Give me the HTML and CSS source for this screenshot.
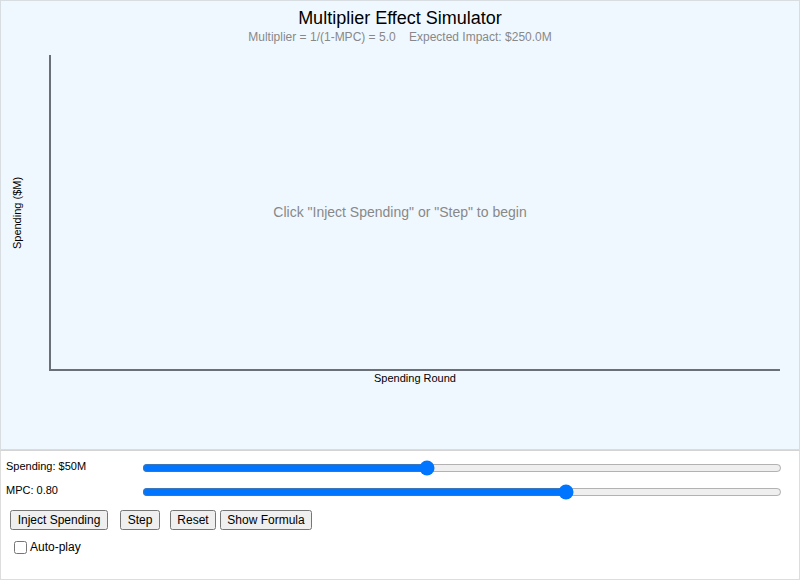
FILE: index.html
```html
<!DOCTYPE html>
<html>
<head>
<meta charset="utf-8">
<link rel="stylesheet" href="styles.css">
</head>
<body>
<div class="app">
  <div class="chart">
    <svg class="chart-svg" width="798" height="448" viewBox="0 0 798 448">
      <text class="title" x="399" y="23" text-anchor="middle">Multiplier Effect Simulator</text>
      <text class="subtitle" x="399" y="40" text-anchor="middle">Multiplier = 1/(1-MPC) = 5.0&#160;&#160;&#160;&#160;Expected Impact: $250.0M</text>
      <line class="axis" x1="49" y1="54" x2="49" y2="370"/>
      <line class="axis" x1="48" y1="369" x2="779" y2="369"/>
      <text class="axis-label" x="414" y="381" text-anchor="middle">Spending Round</text>
      <text class="axis-label" x="20" y="212" text-anchor="middle" transform="rotate(-90 20 212)">Spending ($M)</text>
      <text class="hint" x="399" y="216" text-anchor="middle">Click "Inject Spending" or "Step" to begin</text>
    </svg>
  </div>
  <div class="controls">
    <div class="row">
      <label class="lbl">Spending: $50M</label>
      <input class="slider" type="range" min="10" max="100" value="50">
    </div>
    <div class="row">
      <label class="lbl">MPC: 0.80</label>
      <input class="slider" type="range" min="0.5" max="0.95" step="0.01" value="0.8">
    </div>
    <div class="buttons">
      <button class="btn b1">Inject Spending</button>
      <button class="btn b2">Step</button>
      <button class="btn b3">Reset</button>
      <button class="btn b4">Show Formula</button>
    </div>
    <div class="check-row">
      <label class="check"><input type="checkbox" class="cb">Auto-play</label>
    </div>
  </div>
</div>
</body>
</html>
```

FILE: styles.css
```css
html, body {
  margin: 0;
  padding: 0;
  background: #ffffff;
}
body {
  font-family: "Liberation Sans", Arial, sans-serif;
}
.app {
  width: 800px;
  display: flex;
  flex-direction: column;
}
.chart {
  height: 448px;
  background: #f0f8ff;
  border: 1px solid #d8dde2;
}
.chart-svg {
  display: block;
}
.title {
  font-family: "Liberation Sans", Arial, sans-serif;
  font-size: 18px;
  fill: #000000;
}
.subtitle {
  font-family: "Liberation Sans", Arial, sans-serif;
  font-size: 12px;
  fill: #888888;
}
.axis {
  stroke: #6b7078;
  stroke-width: 2;
}
.axis-label {
  font-family: "Liberation Sans", Arial, sans-serif;
  font-size: 11px;
  fill: #000000;
}
.hint {
  font-family: "Liberation Sans", Arial, sans-serif;
  font-size: 14px;
  fill: #888888;
}
.controls {
  height: 118px;
  border: 1px solid #dddddd;
  border-top: 1px solid #d4d4d4;
  padding: 5px 5px 5px 5px;
  background: #ffffff;
  font-size: 11px;
  color: #000;
}
.row {
  display: flex;
  align-items: center;
  height: 24px;
}
.lbl {
  width: 134px;
  flex: none;
  margin-top: -4px;
}
.slider {
  flex: 1;
  margin: 0 12px 0 2px;
}
.buttons {
  display: flex;
  margin-top: 6px;
  padding-left: 4px;
}
.btn {
  font-family: "Liberation Sans", Arial, sans-serif;
  font-size: 12px;
  height: 20px;
  padding: 1px 4px;
  white-space: nowrap;
}
.b1 { width: 98px; margin-right: 12px; }
.b2 { width: 40px; margin-right: 10px; }
.b3 { width: 46px; margin-right: 4px; }
.b4 { width: 92px; }
.check-row {
  margin-top: 10px;
  padding-left: 4px;
}
.check {
  display: inline-flex;
  align-items: center;
  font-size: 12px;
}
.cb {
  margin: 0 3px 0 4px;
  width: 13px;
  height: 13px;
}
```
